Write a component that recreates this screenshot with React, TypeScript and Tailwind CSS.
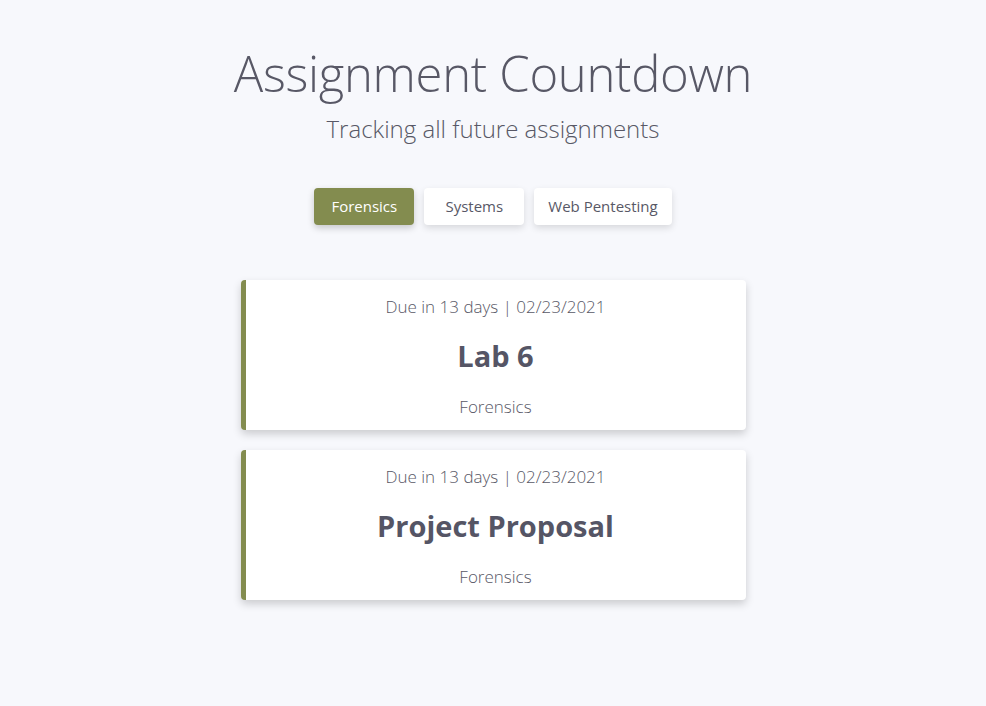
import React, { useState } from 'react';

interface Assignment {
  id: number;
  title: string;
  course: string;
  daysLeft: number;
  due: string;
}

const courses = ['Forensics', 'Systems', 'Web Pentesting'];

const assignments: Assignment[] = [
  { id: 1, title: 'Lab 6', course: 'Forensics', daysLeft: 13, due: '02/23/2021' },
  { id: 2, title: 'Project Proposal', course: 'Forensics', daysLeft: 13, due: '02/23/2021' },
];

export default function App() {
  const [active, setActive] = useState('Forensics');

  return (
    <div className="min-h-screen bg-[#f7f8fc] text-[#585866] font-['Open_Sans',sans-serif]">
      <div className="flex flex-col items-center pt-[49px]">
        <h1 className="text-[49px] leading-[48px] font-light tracking-[-0.3px]">Assignment Countdown</h1>
        <p className="mt-4 text-[24px] leading-8 font-light">Tracking all future assignments</p>

        {/* course filter */}
        <div className="mt-[43px] flex gap-[10px]">
          {courses.map((c) => (
            <button
              key={c}
              onClick={() => setActive(c)}
              className={
                c === active
                  ? 'h-[37px] w-[100px] rounded-[4px] bg-[#838c4f] text-[15px] text-white shadow-[0_3px_7px_rgba(0,0,0,0.2)]'
                  : 'h-[37px] min-w-[100px] rounded-[4px] bg-white px-[14px] text-[15px] text-[#585866] shadow-[0_3px_7px_rgba(0,0,0,0.13)]'
              }
            >
              {c}
            </button>
          ))}
        </div>

        {/* assignment cards */}
        <div className="mt-[55px] flex flex-col gap-5">
          {assignments
            .filter((a) => a.course === active)
            .map((a) => (
              <div
                key={a.id}
                className="w-[505px] h-[150px] rounded-[4px] border-l-[5px] border-[#838c4f] bg-white text-center shadow-[0_4px_8px_rgba(0,0,0,0.18)] flex flex-col pt-[13px]"
              >
                <p className="text-[17px] leading-7 font-light">
                  Due in {a.daysLeft} days | {a.due}
                </p>
                <h2 className="mt-[15px] text-[29px] leading-10 font-bold text-[#555565]">{a.title}</h2>
                <p className="mt-[17px] text-[17px] leading-7 font-light">{a.course}</p>
              </div>
            ))}
        </div>
      </div>
    </div>
  );
}
